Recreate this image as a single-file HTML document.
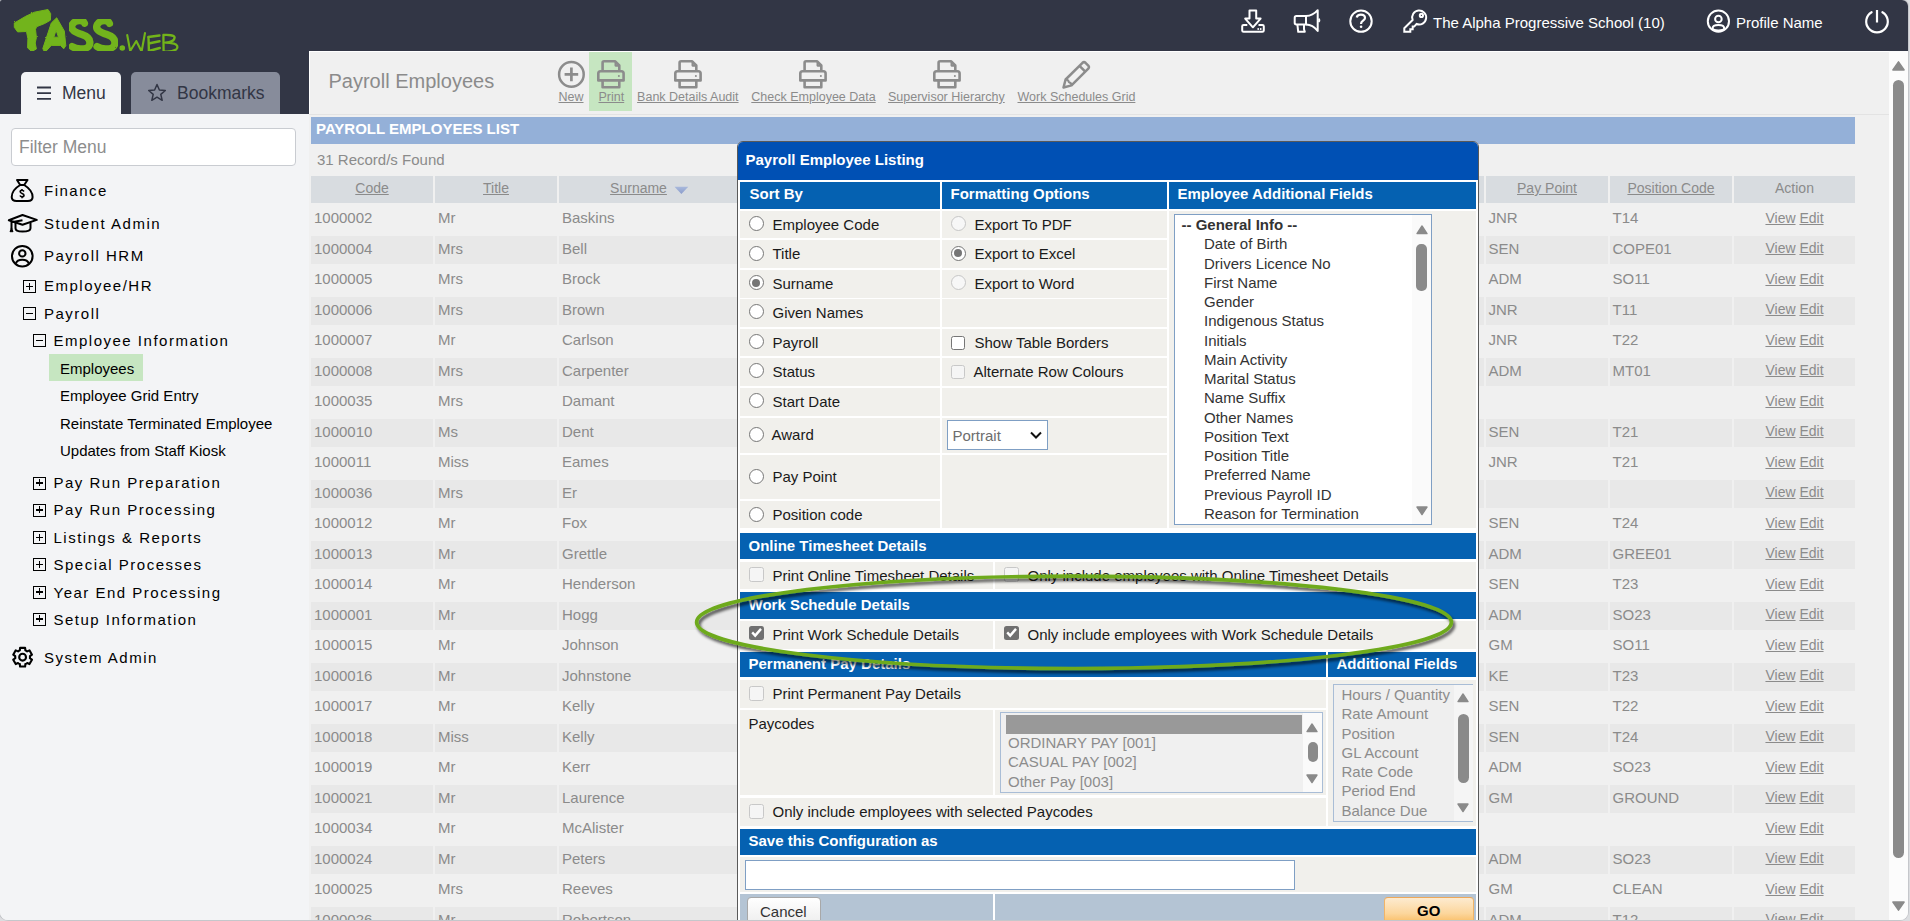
<!DOCTYPE html>
<html><head><meta charset="utf-8">
<style>
*{box-sizing:border-box;margin:0;padding:0}
html,body{width:1910px;height:921px;overflow:hidden;background:#dcdde0}
body{font-family:"Liberation Sans",sans-serif;position:relative}
.abs{position:absolute}
#frame{position:absolute;left:0;top:0;width:1908px;height:920px;overflow:hidden;border-radius:2px 6px 8px 8px;background:#f0f0f0}
#framebd{position:absolute;left:0;top:0;width:1908px;height:920px;border-radius:2px 6px 8px 8px;box-shadow:0 0 0 1px #c5c7cb}
#hdr{position:absolute;left:0;top:0;width:1908px;height:51px;background:#323645}
#side{position:absolute;left:0;top:51px;width:309px;height:870px;background:#f3f4f6}
#sidetop{position:absolute;left:0;top:0;width:309px;height:63px;background:#323645}
.tab{position:absolute;top:21px;height:42px;border-radius:5px 5px 0 0;font-size:17.5px;color:#323645;line-height:42px}
#content{position:absolute;left:309px;top:51px;width:1580px;height:870px;background:#f0f0f0}
#vscroll{position:absolute;left:1889px;top:51px;width:19px;height:869px;background:#fcfcfc}
.hdrtxt{position:absolute;top:14px;color:#fff;font-size:15px;line-height:17px;white-space:nowrap}
.mi{position:absolute;white-space:nowrap;font-size:15px;line-height:17px;color:#000;letter-spacing:0.1em;margin-top:-1px}
.si{position:absolute;white-space:nowrap;font-size:15px;line-height:17px;color:#000;margin-top:-1.3px;margin-left:-1px}
.box{position:absolute;width:13px;height:13px;border:1.15px solid #000}
.box:before{content:"";position:absolute;left:1.7px;top:4.9px;width:7px;height:1.3px;background:#000}
.box.plus:after{content:"";position:absolute;left:4.7px;top:1.9px;width:1.3px;height:7px;background:#000}
.th{position:absolute;background:#d8dce0;color:#8b8b8b;font-size:14px;line-height:25px;text-align:center;white-space:nowrap}
.rb{position:absolute;background:#e8e8e8}
.td{position:absolute;font-size:15px;line-height:17px;color:#8b8b8b;white-space:nowrap}
.act{font-size:14px;width:121px;text-align:center}
.tl{position:absolute;top:39.1px;font-size:12.5px;line-height:15px;color:#8b8b8b;text-decoration:underline;white-space:nowrap}
.mt{position:absolute;font-size:15px;line-height:17px;color:#1a1a1a;white-space:nowrap}
.mh{position:absolute;font-size:15px;line-height:17px;color:#fff;font-weight:bold;white-space:nowrap}
.rd{position:absolute;width:15px;height:15px;border-radius:50%;border:1px solid #767676;background:#fff}
.rd.on:after{content:"";position:absolute;left:2.5px;top:2.5px;width:8px;height:8px;border-radius:50%;background:#767676}
.rd.on{border-color:#767676}
.rd.dis{border-color:#c6c6c6;background:#f7f7f7}
.cb{position:absolute;width:14.5px;height:14.5px;border-radius:2.5px;border:1px solid #767676;background:#fff}
.cb.dis{border-color:#c8c8c8;background:#f5f5f5}
.cb.on{border:none;background:#707070}
</style></head><body>
<div id="framebd"></div>
<div id="frame">
  <div id="hdr">
    <svg class="abs" style="left:0;top:0" width="190" height="60" viewBox="0 0 190 60">
      <defs><filter id="rough" x="-5%" y="-5%" width="110%" height="110%"><feTurbulence type="fractalNoise" baseFrequency="0.9" numOctaves="2" seed="3"/><feDisplacementMap in="SourceGraphic" scale="1.6"/></filter></defs>
      <g fill="#72b41a" stroke="#72b41a" stroke-linejoin="round" filter="url(#rough)">
        <path d="M14.3 23 L25.7 16.3 L34.4 12.2 L48 9.5 L50.7 13.7 L50.4 20.2 L44.7 23.5 L36.6 26.7 L35.5 29.4 L36.4 37.6 L35.2 43 L36.4 49 L31.7 51.5 L27.6 47.9 L27.9 38.7 L26.5 31.5 L17.6 31.9 L14.3 27.3 Z" stroke-width="1"/>
        <path d="M42.8 48.6 L44.8 52.5 L48 49 L51.3 45.4 L60.5 45.4 L63.7 48.8 L65.8 45.7 L64.3 31 L56.7 17.8 L51.3 23 Z M53.8 37.2 L56.1 30.2 L58.5 37.2 Z" stroke-width="1" fill-rule="evenodd"/>
      </g>
      <g fill="none" stroke="#72b41a" stroke-linecap="round" stroke-linejoin="round" filter="url(#rough)">
        <path d="M84.5 23.3 C83 19.5,75 19.5,72.3 24.5 C69.5 30,76 32.5,82 34.5 C88 36.5,91 40,89.5 45 C87.5 50,77 50,72 46.5" stroke-width="7.2"/>
        <path d="M109.5 23.5 C108 19.5,100 19.5,97.3 24.5 C94.5 30,101 32.5,107 34.5 C113 36.5,116 40,114.5 45 C112.5 50,102 50,97 46.5" stroke-width="7.2"/>
      </g>
      <g fill="none" stroke="#72b41a" stroke-linecap="round" stroke-linejoin="round">
        <circle cx="122.3" cy="48" r="2.8" fill="#72b41a" stroke="none"/>
        <path d="M127.2 35 L130.2 51 L136.3 41 L141.6 51.5 L145 33" stroke-width="2.1"/>
        <path d="M148.2 37 L159.5 35.5 M148.5 37 L148.9 51 L159.8 48 M149.8 43.3 L159.5 41.3" stroke-width="2.4"/>
        <path d="M163.4 35 L163.6 51.3 C167 51.8,172 51.5,176.2 49.5 C178.5 47.5,177.5 44.5,174 43.6 C170.5 42.8,167.5 42.6,165.5 42.6 C170 42.2,174.5 40.5,174.6 37.6 C174.6 35.2,168 34.6,163.4 35" stroke-width="2.3"/>
      </g>
    </svg>
    <svg class="abs" style="left:1236px;top:5px" width="34" height="32" viewBox="0 0 34 32" fill="none" stroke="#fff" stroke-width="2" stroke-linejoin="round">
      <path d="M13.5 5.5 H20.2 V13.6 H24.6 L16.9 22.3 L9.2 13.6 H13.5 Z"/>
      <path d="M11.3 19.9 H7.6 Q6.2 19.9,6.2 21.3 V25.4 Q6.2 26.8,7.6 26.8 H26.4 Q27.8 26.8,27.8 25.4 V21.3 Q27.8 19.9,26.4 19.9 H22.5"/>
      <circle cx="22.2" cy="24" r="0.9" fill="#fff" stroke="none"/><circle cx="24.7" cy="24" r="0.9" fill="#fff" stroke="none"/>
    </svg>
    <svg class="abs" style="left:1288px;top:5px" width="36" height="32" viewBox="0 0 36 32" fill="none" stroke="#fff" stroke-width="2" stroke-linejoin="round">
      <path d="M18 11.1 H8.4 Q6.7 11.1,6.7 12.8 V17.8 Q6.7 19.5,8.4 19.5 H18 Z"/>
      <path d="M18 11.1 Q24.8 10.9,29.7 5.2 V25.9 Q24.8 19.7,18 19.5"/>
      <path d="M30.6 13.6 Q32.2 15.3,30.6 17" stroke-width="1.8"/>
      <path d="M9.4 19.5 L10.2 26.8 H16.8 L16 24.3 V19.5"/>
    </svg>
    <svg class="abs" style="left:1344px;top:5px" width="34" height="32" viewBox="0 0 34 32" fill="none" stroke="#fff" stroke-width="2">
      <circle cx="17" cy="16.15" r="10.7"/>
      <path d="M12.7 12.4 C13.1 10.6,14.8 9.6,16.9 9.6 C19.3 9.6,21 11,21 13 C21 15.6,17.1 15.9,17.1 18.6 V19" stroke-width="2.2"/>
      <circle cx="17.1" cy="21.7" r="1.3" fill="#fff" stroke="none"/>
    </svg>
    <svg class="abs" style="left:1398px;top:5px" width="34" height="32" viewBox="0 0 34 32" fill="none" stroke="#fff" stroke-width="2" stroke-linejoin="miter">
      <path d="M14.6 14.9 A7 7 0 1 1 18.6 19 L16.1 21.6 H14.7 V24.2 H12.3 V26.8 H6.3 V23.2 Z"/>
      <circle cx="23.4" cy="10.4" r="1.6"/>
    </svg>
    <div class="hdrtxt" style="left:1433px">The Alpha Progressive School (10)</div>
    <svg class="abs" style="left:1700px;top:5px" width="34" height="32" viewBox="0 0 34 32" fill="none" stroke="#fff" stroke-width="2">
      <circle cx="18.4" cy="16.15" r="10.6"/>
      <circle cx="18.4" cy="14" r="3.3"/>
      <path d="M12.6 23.3 C12.6 20.8,15.2 19.9,18.4 19.9 C21.6 19.9,24.2 20.8,24.2 23.3 C24.2 24.8,21.5 25.4,18.4 25.4 C15.3 25.4,12.6 24.8,12.6 23.3 Z"/>
    </svg>
    <div class="hdrtxt" style="left:1736px">Profile Name</div>
    <svg class="abs" style="left:1860px;top:5px" width="34" height="32" viewBox="0 0 34 32" fill="none" stroke="#fff" stroke-width="2.2" stroke-linecap="round">
      <path d="M11.6 7.2 A10.8 10.8 0 1 0 22.4 7.2"/>
      <path d="M17 5 V17.4" stroke-linecap="butt"/>
    </svg>
  </div>
  <div id="side">
    <div id="sidetop">
      <div class="tab" style="left:21px;width:100px;background:#f3f4f6">
        <svg class="abs" style="left:15px;top:13px" width="16" height="16" viewBox="0 0 16 16" stroke="#323645" stroke-width="1.8"><path d="M1 2.5H15M1 8.2H15M1 13.9H15"/></svg>
        <span class="abs" style="left:41px;top:0">Menu</span>
      </div>
      <div class="tab" style="left:131px;width:149px;background:#878c9b">
        <svg class="abs" style="left:16px;top:11px" width="20" height="20" viewBox="0 0 20 20" fill="none" stroke="#323645" stroke-width="1.5" stroke-linejoin="round"><path d="M10 1.5 L12.4 7 L18.3 7.5 L13.8 11.4 L15.2 17.3 L10 14.2 L4.8 17.3 L6.2 11.4 L1.7 7.5 L7.6 7 Z"/></svg>
        <span class="abs" style="left:46px;top:0">Bookmarks</span>
      </div>
    </div>
    <div class="abs" style="left:11px;top:77px;width:285px;height:38px;background:#fff;border:1px solid #c9ccd1;border-radius:4px"></div>
    <div class="abs" style="left:19px;top:86px;font-size:17.5px;line-height:20px;color:#8d8d8d">Filter Menu</div>
    <svg class="abs" style="left:9px;top:127px" width="28" height="26" viewBox="0 0 28 26" fill="none" stroke="#000" stroke-width="2" stroke-linejoin="round">
      <path d="M8 2 H18.5 L15.2 7 C19.2 9.5,23.6 14,23.6 19 C23.6 21.8,21.8 23,18.8 23 H7.6 C4.6 23,2.7 21.8,2.7 19 C2.7 14,7 9.5,11.2 7 Z"/>
      <path d="M11 7 H15"/>
      <path d="M15 13.5 C14.5 12.6,13.8 12.3,13 12.3 C12 12.3,11.2 12.9,11.2 13.8 C11.2 15.8,15 15,15 17.2 C15 18.2,14.1 18.8,13 18.8 C12 18.8,11.3 18.3,11 17.5 M13 11 V12.3 M13 18.8 V20.2" stroke-width="1.6"/>
    </svg>
    <svg class="abs" style="left:7px;top:161px" width="32" height="22" viewBox="0 0 32 22" fill="none" stroke="#000" stroke-width="2" stroke-linejoin="round">
      <path d="M1.8 8.2 L15.5 3 L29.8 7.9 L15.5 12.8 Z"/>
      <path d="M8.5 10.6 V16.3 C8.5 18.8,12 19.6,15.5 19.6 C19 19.6,23.5 18.8,23.5 16.3 V10.6"/>
      <path d="M15.5 8.2 L4.5 10.2 V17"/>
      <path d="M4.5 15.8 L3 19.7 H6 Z" fill="#000" stroke-width="1"/>
    </svg>
    <svg class="abs" style="left:9px;top:191px" width="28" height="28" viewBox="0 0 28 28" fill="none" stroke="#000" stroke-width="2">
      <circle cx="13.3" cy="14.2" r="10.3"/>
      <circle cx="13.3" cy="11.4" r="3.2"/>
      <path d="M6.8 21.5 C7.7 18.8,10 17.8,13.3 17.8 C16.6 17.8,18.9 18.8,19.8 21.5"/>
    </svg>
    <div class="mi" style="left:44px;top:132px">Finance</div>
    <div class="mi" style="left:44px;top:165px">Student Admin</div>
    <div class="mi" style="left:44px;top:197px">Payroll HRM</div>
    <div class="box plus" style="left:23px;top:229px"></div>
    <div class="mi" style="left:44px;top:227px">Employee/HR</div>
    <div class="box" style="left:23px;top:256px"></div>
    <div class="mi" style="left:44px;top:255px">Payroll</div>
    <div class="box" style="left:33px;top:283px"></div>
    <div class="mi" style="left:53.5px;top:282px">Employee Information</div>
    <div class="abs" style="left:49px;top:303px;width:94px;height:26.5px;background:#c6e6c1"></div>
    <div class="si" style="left:61px;top:310px">Employees</div>
    <div class="si" style="left:61px;top:337px">Employee Grid Entry</div>
    <div class="si" style="left:61px;top:365px">Reinstate Terminated Employee</div>
    <div class="si" style="left:61px;top:392px">Updates from Staff Kiosk</div>
    <div class="box plus" style="left:33px;top:425.5px"></div>
    <div class="mi" style="left:53.5px;top:424px">Pay Run Preparation</div>
    <div class="box plus" style="left:33px;top:452.5px"></div>
    <div class="mi" style="left:53.5px;top:451px">Pay Run Processing</div>
    <div class="box plus" style="left:33px;top:480px"></div>
    <div class="mi" style="left:53.5px;top:479px">Listings &amp; Reports</div>
    <div class="box plus" style="left:33px;top:507px"></div>
    <div class="mi" style="left:53.5px;top:506px">Special Processes</div>
    <div class="box plus" style="left:33px;top:534.5px"></div>
    <div class="mi" style="left:53.5px;top:534px">Year End Processing</div>
    <div class="box plus" style="left:33px;top:561.5px"></div>
    <div class="mi" style="left:53.5px;top:561px">Setup Information</div>
    <svg class="abs" style="left:9px;top:593px" width="27" height="27" viewBox="0 0 27 27" fill="none" stroke="#000" stroke-width="2.1" stroke-linejoin="round">
      <path d="M10.83 6.34 L11.09 3.83 L16.11 3.83 L16.37 6.34 L16.84 6.55 L17.30 6.79 L17.74 7.07 L18.16 7.37 L20.46 6.34 L22.97 10.69 L20.93 12.17 L20.98 12.68 L21.00 13.20 L20.98 13.72 L20.93 14.23 L22.97 15.71 L20.46 20.06 L18.16 19.03 L17.74 19.33 L17.30 19.61 L16.84 19.85 L16.37 20.06 L16.11 22.57 L11.09 22.57 L10.83 20.06 L10.36 19.85 L9.90 19.61 L9.46 19.33 L9.04 19.03 L6.74 20.06 L4.23 15.71 L6.27 14.23 L6.22 13.72 L6.20 13.20 L6.22 12.68 L6.27 12.17 L4.23 10.69 L6.74 6.34 L9.04 7.37 L9.46 7.07 L9.90 6.79 L10.36 6.55 Z"/>
      <circle cx="13.6" cy="13.2" r="3.4"/>
    </svg>
    <div class="mi" style="left:44px;top:598.6px">System Admin</div>
    </div>
  <div id="content">
    <div class="abs" style="left:0;top:0;width:1px;height:63px;background:#fff"></div><div class="abs" style="left:0;top:0;width:1580px;height:1px;background:#fff"></div>
    <div class="abs" style="left:19.5px;top:19px;font-size:20px;line-height:23px;color:#8b8b8b;white-space:nowrap">Payroll Employees</div>
    <div class="abs" style="left:280px;top:1px;width:43px;height:59px;background:#c6e6c1"></div>
    <svg class="abs" style="left:248px;top:9px" width="29" height="29" viewBox="0 0 29 29" fill="none" stroke="#8c8c8c" stroke-width="2.5">
      <circle cx="14.4" cy="14.4" r="12.3"/><path d="M14.4 7.6 V21.2 M7.6 14.4 H21.2" stroke-width="2.7"/></svg>
    <svg class="abs" style="left:288px;top:9px" width="28" height="29" viewBox="0 0 28 29" fill="none" stroke="#8c8c8c" stroke-width="2.6" stroke-linejoin="round">
      <path d="M5.6 11 V2.8 Q5.6 1.3,7.1 1.3 H18.2 L22.3 5.4 V11"/><path d="M18.6 1.8 V5.6 H22" stroke-width="2.2"/>
      <path d="M1.3 20.4 V13.6 Q1.3 11.3,3.6 11.3 H24.3 Q26.6 11.3,26.6 13.6 V20.4 Z"/>
      <path d="M5.6 20.4 V27.2 H22.3 V20.4"/>
      <circle cx="21.9" cy="16.1" r="1" fill="#8c8c8c" stroke="none"/></svg><svg class="abs" style="left:365px;top:9px" width="28" height="29" viewBox="0 0 28 29" fill="none" stroke="#8c8c8c" stroke-width="2.6" stroke-linejoin="round">
      <path d="M5.6 11 V2.8 Q5.6 1.3,7.1 1.3 H18.2 L22.3 5.4 V11"/><path d="M18.6 1.8 V5.6 H22" stroke-width="2.2"/>
      <path d="M1.3 20.4 V13.6 Q1.3 11.3,3.6 11.3 H24.3 Q26.6 11.3,26.6 13.6 V20.4 Z"/>
      <path d="M5.6 20.4 V27.2 H22.3 V20.4"/>
      <circle cx="21.9" cy="16.1" r="1" fill="#8c8c8c" stroke="none"/></svg><svg class="abs" style="left:490px;top:9px" width="28" height="29" viewBox="0 0 28 29" fill="none" stroke="#8c8c8c" stroke-width="2.6" stroke-linejoin="round">
      <path d="M5.6 11 V2.8 Q5.6 1.3,7.1 1.3 H18.2 L22.3 5.4 V11"/><path d="M18.6 1.8 V5.6 H22" stroke-width="2.2"/>
      <path d="M1.3 20.4 V13.6 Q1.3 11.3,3.6 11.3 H24.3 Q26.6 11.3,26.6 13.6 V20.4 Z"/>
      <path d="M5.6 20.4 V27.2 H22.3 V20.4"/>
      <circle cx="21.9" cy="16.1" r="1" fill="#8c8c8c" stroke="none"/></svg><svg class="abs" style="left:623.5px;top:9px" width="28" height="29" viewBox="0 0 28 29" fill="none" stroke="#8c8c8c" stroke-width="2.6" stroke-linejoin="round">
      <path d="M5.6 11 V2.8 Q5.6 1.3,7.1 1.3 H18.2 L22.3 5.4 V11"/><path d="M18.6 1.8 V5.6 H22" stroke-width="2.2"/>
      <path d="M1.3 20.4 V13.6 Q1.3 11.3,3.6 11.3 H24.3 Q26.6 11.3,26.6 13.6 V20.4 Z"/>
      <path d="M5.6 20.4 V27.2 H22.3 V20.4"/>
      <circle cx="21.9" cy="16.1" r="1" fill="#8c8c8c" stroke="none"/></svg>
    <svg class="abs" style="left:753px;top:9px" width="29" height="29" viewBox="0 0 29 29" fill="none" stroke="#8c8c8c" stroke-width="2.5" stroke-linejoin="round">
      <path d="M20.5 2.8 Q22 1.5,23.5 2.8 L26.3 5.6 Q27.6 7.1,26.3 8.6 L9.5 25.4 L1.5 27.5 L3.6 19.5 Z"/><path d="M17.5 5.8 L23.3 11.6"/><path d="M3.6 19.5 Q6.5 19.5,6.8 22.2 Q9.5 22.5,9.5 25.4" stroke-width="2"/></svg>
    <div class="tl" style="left:249.5px">New</div><div class="tl" style="left:289.5px">Print</div><div class="tl" style="left:328.1px">Bank Details Audit</div><div class="tl" style="left:442.3px">Check Employee Data</div><div class="tl" style="left:579.0px">Supervisor Hierarchy</div><div class="tl" style="left:708.5px">Work Schedules Grid</div>
    <div class="abs" style="left:0;top:63px;width:1580px;height:1px;background:#e3e3e3"></div>
    <div class="abs" style="left:2px;top:66px;width:1544px;height:27px;background:#94b0d8;color:#fff;font-weight:bold;font-size:15px;line-height:24px;padding-left:5px;white-space:nowrap">PAYROLL EMPLOYEES LIST</div>
    <div class="abs" style="left:8px;top:100px;font-size:15px;line-height:17px;color:#8b8b8b;white-space:nowrap">31 Record/s Found</div>
    <div id="tbl">
<div class="th" style="left:2px;top:125px;width:122px;height:27.4px"><u>Code</u></div>
<div class="th" style="left:126px;top:125px;width:122px;height:27.4px"><u>Title</u></div>
<div class="th" style="left:250px;top:125px;width:181px;height:27.4px;padding-right:22px"><u>Surname</u><svg style="position:absolute;left:115px;top:10px" width="15" height="9" viewBox="0 0 15 9"><defs><linearGradient id="ag" x1="0" y1="0" x2="0" y2="1"><stop offset="0" stop-color="#a9b9dc"/><stop offset="1" stop-color="#8a9ccb"/></linearGradient></defs><path d="M0.5 0.8 H14.3 L7.4 8 Z" fill="url(#ag)"/></svg></div>
<div class="th" style="left:1177px;top:125px;width:122px;height:27.4px"><u>Pay Point</u></div>
<div class="th" style="left:1301px;top:125px;width:122px;height:27.4px"><u>Position Code</u></div>
<div class="th" style="left:1425px;top:125px;width:121px;height:27.4px">Action</div>
<div class="th" style="left:433px;top:125px;width:742px;height:27.4px"></div>
<div class="td" style="left:5px;top:158.4px">1000002</div>
<div class="td" style="left:129px;top:158.4px">Mr</div>
<div class="td" style="left:253px;top:158.4px">Baskins</div>
<div class="td" style="left:1179.5px;top:158.4px">JNR</div>
<div class="td" style="left:1303.5px;top:158.4px">T14</div>
<div class="td act" style="left:1425px;top:158.9px"><u>View</u> <u>Edit</u></div>
<div class="rb" style="left:2px;top:184.9px;width:122px;height:28.5px"></div>
<div class="rb" style="left:126px;top:184.9px;width:122px;height:28.5px"></div>
<div class="rb" style="left:250px;top:184.9px;width:925px;height:28.5px"></div>
<div class="rb" style="left:1177px;top:184.9px;width:122px;height:28.5px"></div>
<div class="rb" style="left:1301px;top:184.9px;width:122px;height:28.5px"></div>
<div class="rb" style="left:1425px;top:184.9px;width:121px;height:28.5px"></div>
<div class="td" style="left:5px;top:188.9px">1000004</div>
<div class="td" style="left:129px;top:188.9px">Mrs</div>
<div class="td" style="left:253px;top:188.9px">Bell</div>
<div class="td" style="left:1179.5px;top:188.9px">SEN</div>
<div class="td" style="left:1303.5px;top:188.9px">COPE01</div>
<div class="td act" style="left:1425px;top:189.4px"><u>View</u> <u>Edit</u></div>
<div class="td" style="left:5px;top:219.4px">1000005</div>
<div class="td" style="left:129px;top:219.4px">Mrs</div>
<div class="td" style="left:253px;top:219.4px">Brock</div>
<div class="td" style="left:1179.5px;top:219.4px">ADM</div>
<div class="td" style="left:1303.5px;top:219.4px">SO11</div>
<div class="td act" style="left:1425px;top:219.9px"><u>View</u> <u>Edit</u></div>
<div class="rb" style="left:2px;top:245.9px;width:122px;height:28.5px"></div>
<div class="rb" style="left:126px;top:245.9px;width:122px;height:28.5px"></div>
<div class="rb" style="left:250px;top:245.9px;width:925px;height:28.5px"></div>
<div class="rb" style="left:1177px;top:245.9px;width:122px;height:28.5px"></div>
<div class="rb" style="left:1301px;top:245.9px;width:122px;height:28.5px"></div>
<div class="rb" style="left:1425px;top:245.9px;width:121px;height:28.5px"></div>
<div class="td" style="left:5px;top:249.9px">1000006</div>
<div class="td" style="left:129px;top:249.9px">Mrs</div>
<div class="td" style="left:253px;top:249.9px">Brown</div>
<div class="td" style="left:1179.5px;top:249.9px">JNR</div>
<div class="td" style="left:1303.5px;top:249.9px">T11</div>
<div class="td act" style="left:1425px;top:250.4px"><u>View</u> <u>Edit</u></div>
<div class="td" style="left:5px;top:280.4px">1000007</div>
<div class="td" style="left:129px;top:280.4px">Mr</div>
<div class="td" style="left:253px;top:280.4px">Carlson</div>
<div class="td" style="left:1179.5px;top:280.4px">JNR</div>
<div class="td" style="left:1303.5px;top:280.4px">T22</div>
<div class="td act" style="left:1425px;top:280.9px"><u>View</u> <u>Edit</u></div>
<div class="rb" style="left:2px;top:306.9px;width:122px;height:28.5px"></div>
<div class="rb" style="left:126px;top:306.9px;width:122px;height:28.5px"></div>
<div class="rb" style="left:250px;top:306.9px;width:925px;height:28.5px"></div>
<div class="rb" style="left:1177px;top:306.9px;width:122px;height:28.5px"></div>
<div class="rb" style="left:1301px;top:306.9px;width:122px;height:28.5px"></div>
<div class="rb" style="left:1425px;top:306.9px;width:121px;height:28.5px"></div>
<div class="td" style="left:5px;top:310.9px">1000008</div>
<div class="td" style="left:129px;top:310.9px">Mrs</div>
<div class="td" style="left:253px;top:310.9px">Carpenter</div>
<div class="td" style="left:1179.5px;top:310.9px">ADM</div>
<div class="td" style="left:1303.5px;top:310.9px">MT01</div>
<div class="td act" style="left:1425px;top:311.4px"><u>View</u> <u>Edit</u></div>
<div class="td" style="left:5px;top:341.4px">1000035</div>
<div class="td" style="left:129px;top:341.4px">Mrs</div>
<div class="td" style="left:253px;top:341.4px">Damant</div>
<div class="td act" style="left:1425px;top:341.9px"><u>View</u> <u>Edit</u></div>
<div class="rb" style="left:2px;top:367.9px;width:122px;height:28.5px"></div>
<div class="rb" style="left:126px;top:367.9px;width:122px;height:28.5px"></div>
<div class="rb" style="left:250px;top:367.9px;width:925px;height:28.5px"></div>
<div class="rb" style="left:1177px;top:367.9px;width:122px;height:28.5px"></div>
<div class="rb" style="left:1301px;top:367.9px;width:122px;height:28.5px"></div>
<div class="rb" style="left:1425px;top:367.9px;width:121px;height:28.5px"></div>
<div class="td" style="left:5px;top:371.9px">1000010</div>
<div class="td" style="left:129px;top:371.9px">Ms</div>
<div class="td" style="left:253px;top:371.9px">Dent</div>
<div class="td" style="left:1179.5px;top:371.9px">SEN</div>
<div class="td" style="left:1303.5px;top:371.9px">T21</div>
<div class="td act" style="left:1425px;top:372.4px"><u>View</u> <u>Edit</u></div>
<div class="td" style="left:5px;top:402.4px">1000011</div>
<div class="td" style="left:129px;top:402.4px">Miss</div>
<div class="td" style="left:253px;top:402.4px">Eames</div>
<div class="td" style="left:1179.5px;top:402.4px">JNR</div>
<div class="td" style="left:1303.5px;top:402.4px">T21</div>
<div class="td act" style="left:1425px;top:402.9px"><u>View</u> <u>Edit</u></div>
<div class="rb" style="left:2px;top:428.9px;width:122px;height:28.5px"></div>
<div class="rb" style="left:126px;top:428.9px;width:122px;height:28.5px"></div>
<div class="rb" style="left:250px;top:428.9px;width:925px;height:28.5px"></div>
<div class="rb" style="left:1177px;top:428.9px;width:122px;height:28.5px"></div>
<div class="rb" style="left:1301px;top:428.9px;width:122px;height:28.5px"></div>
<div class="rb" style="left:1425px;top:428.9px;width:121px;height:28.5px"></div>
<div class="td" style="left:5px;top:432.9px">1000036</div>
<div class="td" style="left:129px;top:432.9px">Mrs</div>
<div class="td" style="left:253px;top:432.9px">Er</div>
<div class="td act" style="left:1425px;top:433.4px"><u>View</u> <u>Edit</u></div>
<div class="td" style="left:5px;top:463.4px">1000012</div>
<div class="td" style="left:129px;top:463.4px">Mr</div>
<div class="td" style="left:253px;top:463.4px">Fox</div>
<div class="td" style="left:1179.5px;top:463.4px">SEN</div>
<div class="td" style="left:1303.5px;top:463.4px">T24</div>
<div class="td act" style="left:1425px;top:463.9px"><u>View</u> <u>Edit</u></div>
<div class="rb" style="left:2px;top:489.9px;width:122px;height:28.5px"></div>
<div class="rb" style="left:126px;top:489.9px;width:122px;height:28.5px"></div>
<div class="rb" style="left:250px;top:489.9px;width:925px;height:28.5px"></div>
<div class="rb" style="left:1177px;top:489.9px;width:122px;height:28.5px"></div>
<div class="rb" style="left:1301px;top:489.9px;width:122px;height:28.5px"></div>
<div class="rb" style="left:1425px;top:489.9px;width:121px;height:28.5px"></div>
<div class="td" style="left:5px;top:493.9px">1000013</div>
<div class="td" style="left:129px;top:493.9px">Mr</div>
<div class="td" style="left:253px;top:493.9px">Grettle</div>
<div class="td" style="left:1179.5px;top:493.9px">ADM</div>
<div class="td" style="left:1303.5px;top:493.9px">GREE01</div>
<div class="td act" style="left:1425px;top:494.4px"><u>View</u> <u>Edit</u></div>
<div class="td" style="left:5px;top:524.4px">1000014</div>
<div class="td" style="left:129px;top:524.4px">Mr</div>
<div class="td" style="left:253px;top:524.4px">Henderson</div>
<div class="td" style="left:1179.5px;top:524.4px">SEN</div>
<div class="td" style="left:1303.5px;top:524.4px">T23</div>
<div class="td act" style="left:1425px;top:524.9px"><u>View</u> <u>Edit</u></div>
<div class="rb" style="left:2px;top:550.9px;width:122px;height:28.5px"></div>
<div class="rb" style="left:126px;top:550.9px;width:122px;height:28.5px"></div>
<div class="rb" style="left:250px;top:550.9px;width:925px;height:28.5px"></div>
<div class="rb" style="left:1177px;top:550.9px;width:122px;height:28.5px"></div>
<div class="rb" style="left:1301px;top:550.9px;width:122px;height:28.5px"></div>
<div class="rb" style="left:1425px;top:550.9px;width:121px;height:28.5px"></div>
<div class="td" style="left:5px;top:554.9px">1000001</div>
<div class="td" style="left:129px;top:554.9px">Mr</div>
<div class="td" style="left:253px;top:554.9px">Hogg</div>
<div class="td" style="left:1179.5px;top:554.9px">ADM</div>
<div class="td" style="left:1303.5px;top:554.9px">SO23</div>
<div class="td act" style="left:1425px;top:555.4px"><u>View</u> <u>Edit</u></div>
<div class="td" style="left:5px;top:585.4px">1000015</div>
<div class="td" style="left:129px;top:585.4px">Mr</div>
<div class="td" style="left:253px;top:585.4px">Johnson</div>
<div class="td" style="left:1179.5px;top:585.4px">GM</div>
<div class="td" style="left:1303.5px;top:585.4px">SO11</div>
<div class="td act" style="left:1425px;top:585.9px"><u>View</u> <u>Edit</u></div>
<div class="rb" style="left:2px;top:611.9px;width:122px;height:28.5px"></div>
<div class="rb" style="left:126px;top:611.9px;width:122px;height:28.5px"></div>
<div class="rb" style="left:250px;top:611.9px;width:925px;height:28.5px"></div>
<div class="rb" style="left:1177px;top:611.9px;width:122px;height:28.5px"></div>
<div class="rb" style="left:1301px;top:611.9px;width:122px;height:28.5px"></div>
<div class="rb" style="left:1425px;top:611.9px;width:121px;height:28.5px"></div>
<div class="td" style="left:5px;top:615.9px">1000016</div>
<div class="td" style="left:129px;top:615.9px">Mr</div>
<div class="td" style="left:253px;top:615.9px">Johnstone</div>
<div class="td" style="left:1179.5px;top:615.9px">KE</div>
<div class="td" style="left:1303.5px;top:615.9px">T23</div>
<div class="td act" style="left:1425px;top:616.4px"><u>View</u> <u>Edit</u></div>
<div class="td" style="left:5px;top:646.4px">1000017</div>
<div class="td" style="left:129px;top:646.4px">Mr</div>
<div class="td" style="left:253px;top:646.4px">Kelly</div>
<div class="td" style="left:1179.5px;top:646.4px">SEN</div>
<div class="td" style="left:1303.5px;top:646.4px">T22</div>
<div class="td act" style="left:1425px;top:646.9px"><u>View</u> <u>Edit</u></div>
<div class="rb" style="left:2px;top:672.9px;width:122px;height:28.5px"></div>
<div class="rb" style="left:126px;top:672.9px;width:122px;height:28.5px"></div>
<div class="rb" style="left:250px;top:672.9px;width:925px;height:28.5px"></div>
<div class="rb" style="left:1177px;top:672.9px;width:122px;height:28.5px"></div>
<div class="rb" style="left:1301px;top:672.9px;width:122px;height:28.5px"></div>
<div class="rb" style="left:1425px;top:672.9px;width:121px;height:28.5px"></div>
<div class="td" style="left:5px;top:676.9px">1000018</div>
<div class="td" style="left:129px;top:676.9px">Miss</div>
<div class="td" style="left:253px;top:676.9px">Kelly</div>
<div class="td" style="left:1179.5px;top:676.9px">SEN</div>
<div class="td" style="left:1303.5px;top:676.9px">T24</div>
<div class="td act" style="left:1425px;top:677.4px"><u>View</u> <u>Edit</u></div>
<div class="td" style="left:5px;top:707.4px">1000019</div>
<div class="td" style="left:129px;top:707.4px">Mr</div>
<div class="td" style="left:253px;top:707.4px">Kerr</div>
<div class="td" style="left:1179.5px;top:707.4px">ADM</div>
<div class="td" style="left:1303.5px;top:707.4px">SO23</div>
<div class="td act" style="left:1425px;top:707.9px"><u>View</u> <u>Edit</u></div>
<div class="rb" style="left:2px;top:733.9px;width:122px;height:28.5px"></div>
<div class="rb" style="left:126px;top:733.9px;width:122px;height:28.5px"></div>
<div class="rb" style="left:250px;top:733.9px;width:925px;height:28.5px"></div>
<div class="rb" style="left:1177px;top:733.9px;width:122px;height:28.5px"></div>
<div class="rb" style="left:1301px;top:733.9px;width:122px;height:28.5px"></div>
<div class="rb" style="left:1425px;top:733.9px;width:121px;height:28.5px"></div>
<div class="td" style="left:5px;top:737.9px">1000021</div>
<div class="td" style="left:129px;top:737.9px">Mr</div>
<div class="td" style="left:253px;top:737.9px">Laurence</div>
<div class="td" style="left:1179.5px;top:737.9px">GM</div>
<div class="td" style="left:1303.5px;top:737.9px">GROUND</div>
<div class="td act" style="left:1425px;top:738.4px"><u>View</u> <u>Edit</u></div>
<div class="td" style="left:5px;top:768.4px">1000034</div>
<div class="td" style="left:129px;top:768.4px">Mr</div>
<div class="td" style="left:253px;top:768.4px">McAlister</div>
<div class="td act" style="left:1425px;top:768.9px"><u>View</u> <u>Edit</u></div>
<div class="rb" style="left:2px;top:794.9px;width:122px;height:28.5px"></div>
<div class="rb" style="left:126px;top:794.9px;width:122px;height:28.5px"></div>
<div class="rb" style="left:250px;top:794.9px;width:925px;height:28.5px"></div>
<div class="rb" style="left:1177px;top:794.9px;width:122px;height:28.5px"></div>
<div class="rb" style="left:1301px;top:794.9px;width:122px;height:28.5px"></div>
<div class="rb" style="left:1425px;top:794.9px;width:121px;height:28.5px"></div>
<div class="td" style="left:5px;top:798.9px">1000024</div>
<div class="td" style="left:129px;top:798.9px">Mr</div>
<div class="td" style="left:253px;top:798.9px">Peters</div>
<div class="td" style="left:1179.5px;top:798.9px">ADM</div>
<div class="td" style="left:1303.5px;top:798.9px">SO23</div>
<div class="td act" style="left:1425px;top:799.4px"><u>View</u> <u>Edit</u></div>
<div class="td" style="left:5px;top:829.4px">1000025</div>
<div class="td" style="left:129px;top:829.4px">Mrs</div>
<div class="td" style="left:253px;top:829.4px">Reeves</div>
<div class="td" style="left:1179.5px;top:829.4px">GM</div>
<div class="td" style="left:1303.5px;top:829.4px">CLEAN</div>
<div class="td act" style="left:1425px;top:829.9px"><u>View</u> <u>Edit</u></div>
<div class="rb" style="left:2px;top:855.9px;width:122px;height:28.5px"></div>
<div class="rb" style="left:126px;top:855.9px;width:122px;height:28.5px"></div>
<div class="rb" style="left:250px;top:855.9px;width:925px;height:28.5px"></div>
<div class="rb" style="left:1177px;top:855.9px;width:122px;height:28.5px"></div>
<div class="rb" style="left:1301px;top:855.9px;width:122px;height:28.5px"></div>
<div class="rb" style="left:1425px;top:855.9px;width:121px;height:28.5px"></div>
<div class="td" style="left:5px;top:859.9px">1000026</div>
<div class="td" style="left:129px;top:859.9px">Mr</div>
<div class="td" style="left:253px;top:859.9px">Robertson</div>
<div class="td" style="left:1179.5px;top:859.9px">ADM</div>
<div class="td" style="left:1303.5px;top:859.9px">T12</div>
<div class="td act" style="left:1425px;top:860.4px"><u>View</u> <u>Edit</u></div>
</div>
  </div>
  <div id="modal"><!--MODAL--><div class="abs" style="left:737px;top:141px;width:742px;height:790px;background:#fff;border:1px solid #595959;border-radius:6px 6px 0 0;overflow:hidden"><div class="abs" style="left:0;top:0;width:740px;height:37.6px;background:#0050b4"></div></div>
<div class="mh" style="left:745.50px;top:151.30px;">Payroll Employee Listing</div>
<div class="abs" style="left:740.00px;top:182.00px;width:200.00px;height:26.70px;background:#0561b1;"></div>
<div class="mh" style="left:749.50px;top:185.20px;">Sort By</div>
<div class="abs" style="left:942.00px;top:182.00px;width:225.00px;height:26.70px;background:#0561b1;"></div>
<div class="mh" style="left:950.50px;top:185.20px;">Formatting Options</div>
<div class="abs" style="left:1169.00px;top:182.00px;width:307.00px;height:26.70px;background:#0561b1;"></div>
<div class="mh" style="left:1177.50px;top:185.20px;">Employee Additional Fields</div>
<div class="abs" style="left:740.00px;top:210.60px;width:200.00px;height:27.90px;background:#f1f0ec;"></div>
<div class="rd" style="left:748.50px;top:216.40px"></div>
<div class="mt" style="left:772.50px;top:215.80px;">Employee Code</div>
<div class="abs" style="left:740.00px;top:240.10px;width:200.00px;height:27.90px;background:#f1f0ec;"></div>
<div class="rd" style="left:748.50px;top:245.90px"></div>
<div class="mt" style="left:772.50px;top:245.30px;">Title</div>
<div class="abs" style="left:740.00px;top:269.60px;width:200.00px;height:28.40px;background:#f1f0ec;"></div>
<div class="rd on" style="left:748.50px;top:275.20px"></div>
<div class="mt" style="left:772.50px;top:274.60px;">Surname</div>
<div class="abs" style="left:740.00px;top:299.10px;width:200.00px;height:27.90px;background:#f1f0ec;"></div>
<div class="rd" style="left:748.50px;top:304.40px"></div>
<div class="mt" style="left:772.50px;top:303.80px;">Given Names</div>
<div class="abs" style="left:740.00px;top:328.60px;width:200.00px;height:27.90px;background:#f1f0ec;"></div>
<div class="rd" style="left:748.50px;top:334.20px"></div>
<div class="mt" style="left:772.50px;top:333.60px;">Payroll</div>
<div class="abs" style="left:740.00px;top:358.10px;width:200.00px;height:27.50px;background:#f1f0ec;"></div>
<div class="rd" style="left:748.50px;top:363.30px"></div>
<div class="mt" style="left:772.50px;top:362.70px;">Status</div>
<div class="abs" style="left:740.00px;top:387.60px;width:200.00px;height:28.10px;background:#f1f0ec;"></div>
<div class="rd" style="left:748.50px;top:393.20px"></div>
<div class="mt" style="left:772.50px;top:392.60px;">Start Date</div>
<div class="abs" style="left:740.00px;top:417.60px;width:200.00px;height:35.30px;background:#f1f0ec;"></div>
<div class="rd" style="left:748.50px;top:426.50px"></div>
<div class="mt" style="left:771.50px;top:425.90px;">Award</div>
<div class="abs" style="left:740.00px;top:455.00px;width:200.00px;height:44.00px;background:#f1f0ec;"></div>
<div class="rd" style="left:748.50px;top:468.60px"></div>
<div class="mt" style="left:772.50px;top:468.00px;">Pay Point</div>
<div class="abs" style="left:740.00px;top:501.00px;width:200.00px;height:27.40px;background:#f1f0ec;"></div>
<div class="rd" style="left:748.50px;top:506.60px"></div>
<div class="mt" style="left:772.50px;top:506.00px;">Position code</div>
<div class="abs" style="left:942.00px;top:210.60px;width:225.00px;height:27.90px;background:#f1f0ec;"></div>
<div class="abs" style="left:942.00px;top:240.10px;width:225.00px;height:27.90px;background:#f1f0ec;"></div>
<div class="abs" style="left:942.00px;top:269.60px;width:225.00px;height:28.40px;background:#f1f0ec;"></div>
<div class="abs" style="left:942.00px;top:299.10px;width:225.00px;height:27.90px;background:#f1f0ec;"></div>
<div class="abs" style="left:942.00px;top:328.60px;width:225.00px;height:27.90px;background:#f1f0ec;"></div>
<div class="abs" style="left:942.00px;top:358.10px;width:225.00px;height:27.50px;background:#f1f0ec;"></div>
<div class="abs" style="left:942.00px;top:387.60px;width:225.00px;height:28.10px;background:#f1f0ec;"></div>
<div class="abs" style="left:942.00px;top:417.60px;width:225.00px;height:35.30px;background:#f1f0ec;"></div>
<div class="abs" style="left:942.00px;top:455.00px;width:225.00px;height:73.40px;background:#f1f0ec;"></div>
<div class="rd dis" style="left:950.50px;top:216.40px"></div>
<div class="mt" style="left:974.50px;top:215.80px;">Export To PDF</div>
<div class="rd on" style="left:950.50px;top:245.90px"></div>
<div class="mt" style="left:974.50px;top:245.30px;">Export to Excel</div>
<div class="rd dis" style="left:950.50px;top:275.20px"></div>
<div class="mt" style="left:974.50px;top:274.60px;">Export to Word</div>
<div class="cb " style="left:950.50px;top:335.50px"></div>
<div class="mt" style="left:974.50px;top:333.60px;">Show Table Borders</div>
<div class="cb dis" style="left:950.50px;top:364.60px"></div>
<div class="mt" style="left:973.50px;top:362.70px;">Alternate Row Colours</div>
<div class="abs" style="left:947.4px;top:420.4px;width:100.2px;height:29.8px;background:#fff;border:1px solid #7f9fc4"></div>
<div class="mt" style="left:952.50px;top:427.20px;color:#6d6d6d">Portrait</div>
<svg class="abs" style="left:1028.5px;top:430px" width="14" height="10" viewBox="0 0 14 10"><path d="M2 2.5 L7 7.5 L12 2.5" fill="none" stroke="#111" stroke-width="2"/></svg>
<div class="abs" style="left:1169.00px;top:210.60px;width:307.00px;height:317.80px;background:#f1f0ec;"></div>
<div class="abs" style="left:1174.3px;top:213.8px;width:257.7px;height:311.6px;background:#fff;border:1px solid #7f9fc4"></div>
<div class="abs" style="left:1412.00px;top:214.80px;width:19.00px;height:309.60px;background:#fafafa;"></div>
<svg class="abs" style="left:1412.5px;top:221.5px" width="18" height="14" viewBox="0 0 18 14"><path d="M4 11.6 L9 4 L14 11.6 Z" fill="#8a8a8a" stroke="#8a8a8a" stroke-width="1.4" stroke-linejoin="round"/></svg>
<svg class="abs" style="left:1412.5px;top:504px" width="18" height="14" viewBox="0 0 18 14"><path d="M4 3 L9 10.6 L14 3 Z" fill="#8a8a8a" stroke="#8a8a8a" stroke-width="1.4" stroke-linejoin="round"/></svg>
<div class="abs" style="left:1416.4px;top:244.4px;width:10.3px;height:46.3px;background:#8a8a8a;border-radius:5px"></div>
<div class="mt" style="left:1181.50px;top:216.40px;font-weight:bold;color:#333">-- General Info --</div>
<div class="mt" style="left:1204.00px;top:235.40px;color:#333">Date of Birth</div>
<div class="mt" style="left:1204.00px;top:254.65px;color:#333">Drivers Licence No</div>
<div class="mt" style="left:1204.00px;top:273.90px;color:#333">First Name</div>
<div class="mt" style="left:1204.00px;top:293.15px;color:#333">Gender</div>
<div class="mt" style="left:1204.00px;top:312.40px;color:#333">Indigenous Status</div>
<div class="mt" style="left:1204.00px;top:331.65px;color:#333">Initials</div>
<div class="mt" style="left:1204.00px;top:350.90px;color:#333">Main Activity</div>
<div class="mt" style="left:1204.00px;top:370.15px;color:#333">Marital Status</div>
<div class="mt" style="left:1204.00px;top:389.40px;color:#333">Name Suffix</div>
<div class="mt" style="left:1204.00px;top:408.65px;color:#333">Other Names</div>
<div class="mt" style="left:1204.00px;top:427.90px;color:#333">Position Text</div>
<div class="mt" style="left:1204.00px;top:447.15px;color:#333">Position Title</div>
<div class="mt" style="left:1204.00px;top:466.40px;color:#333">Preferred Name</div>
<div class="mt" style="left:1204.00px;top:485.65px;color:#333">Previous Payroll ID</div>
<div class="mt" style="left:1204.00px;top:504.90px;color:#333">Reason for Termination</div>
<div class="abs" style="left:740.00px;top:533.20px;width:736.00px;height:26.10px;background:#0561b1;"></div>
<div class="mh" style="left:748.50px;top:536.70px;">Online Timesheet Details</div>
<div class="abs" style="left:740.00px;top:561.90px;width:252.60px;height:27.50px;background:#f1f0ec;"></div>
<div class="abs" style="left:994.80px;top:561.90px;width:481.20px;height:27.50px;background:#f1f0ec;"></div>
<div class="cb dis" style="left:749.00px;top:567.30px"></div>
<div class="mt" style="left:772.50px;top:567.30px;">Print Online Timesheet Details</div>
<div class="cb dis" style="left:1004.00px;top:567.30px"></div>
<div class="mt" style="left:1027.50px;top:567.30px;">Only include employees with Online Timesheet Details</div>
<div class="abs" style="left:740.00px;top:592.20px;width:736.00px;height:26.60px;background:#0561b1;"></div>
<div class="mh" style="left:748.50px;top:595.80px;">Work Schedule Details</div>
<div class="abs" style="left:740.00px;top:621.00px;width:252.60px;height:28.00px;background:#f1f0ec;"></div>
<div class="abs" style="left:994.80px;top:621.00px;width:481.20px;height:28.00px;background:#f1f0ec;"></div>
<div class="cb on" style="left:749.00px;top:625.80px"><svg width="15" height="15" viewBox="0 0 15 15" style="position:absolute;left:-0.5px;top:-0.5px"><path d="M3.2 7.4 L6.2 10.6 L12 3.9" fill="none" stroke="#fff" stroke-width="2.4"/></svg></div>
<div class="mt" style="left:772.50px;top:626.00px;">Print Work Schedule Details</div>
<div class="cb on" style="left:1004.00px;top:625.80px"><svg width="15" height="15" viewBox="0 0 15 15" style="position:absolute;left:-0.5px;top:-0.5px"><path d="M3.2 7.4 L6.2 10.6 L12 3.9" fill="none" stroke="#fff" stroke-width="2.4"/></svg></div>
<div class="mt" style="left:1027.50px;top:626.00px;">Only include employees with Work Schedule Details</div>
<div class="abs" style="left:740.00px;top:651.60px;width:585.80px;height:25.80px;background:#0561b1;"></div>
<div class="mh" style="left:748.50px;top:654.80px;">Permanent Pay Details</div>
<div class="abs" style="left:1328.00px;top:651.60px;width:148.00px;height:25.80px;background:#0561b1;"></div>
<div class="mh" style="left:1336.50px;top:654.80px;">Additional Fields</div>
<div class="abs" style="left:740.00px;top:680.00px;width:585.80px;height:27.60px;background:#f1f0ec;"></div>
<div class="cb dis" style="left:749.00px;top:686.00px"></div>
<div class="mt" style="left:772.50px;top:685.40px;">Print Permanent Pay Details</div>
<div class="abs" style="left:740.00px;top:710.00px;width:252.70px;height:85.20px;background:#f1f0ec;"></div>
<div class="abs" style="left:994.80px;top:710.00px;width:331.00px;height:85.20px;background:#f1f0ec;"></div>
<div class="mt" style="left:748.50px;top:714.80px;">Paycodes</div>
<div class="abs" style="left:1000px;top:712.4px;width:322.5px;height:80.9px;background:#f0f0f0;border:1px solid #a9bdd6"></div>
<div class="abs" style="left:1006.00px;top:715.00px;width:295.70px;height:18.70px;background:#999;"></div>
<div class="mt" style="left:1008.00px;top:734.20px;color:#8c8c8c">ORDINARY PAY [001]</div>
<div class="mt" style="left:1008.00px;top:753.45px;color:#8c8c8c">CASUAL PAY [002]</div>
<div class="mt" style="left:1008.00px;top:772.70px;color:#8c8c8c">Other Pay [003]</div>
<div class="abs" style="left:1303.00px;top:713.40px;width:18.50px;height:78.90px;background:#fafafa;"></div>
<svg class="abs" style="left:1303px;top:720px" width="18" height="14" viewBox="0 0 18 14"><path d="M4 11.6 L9 4 L14 11.6 Z" fill="#8a8a8a" stroke="#8a8a8a" stroke-width="1.4" stroke-linejoin="round"/></svg>
<svg class="abs" style="left:1303px;top:772px" width="18" height="14" viewBox="0 0 18 14"><path d="M4 3 L9 10.6 L14 3 Z" fill="#8a8a8a" stroke="#8a8a8a" stroke-width="1.4" stroke-linejoin="round"/></svg>
<div class="abs" style="left:1307.5px;top:741.5px;width:10.5px;height:20.5px;background:#8a8a8a;border-radius:5px"></div>
<div class="abs" style="left:740.00px;top:797.80px;width:585.80px;height:28.10px;background:#f1f0ec;"></div>
<div class="cb dis" style="left:749.00px;top:804.00px"></div>
<div class="mt" style="left:772.50px;top:803.10px;">Only include employees with selected Paycodes</div>
<div class="abs" style="left:1328.00px;top:680.00px;width:148.00px;height:145.90px;background:#f1f0ec;"></div>
<div class="abs" style="left:1333.2px;top:684.4px;width:140.3px;height:138.1px;background:#efefef;border:1px solid #a9bdd6"></div>
<div class="mt" style="left:1341.50px;top:686.20px;color:#8c8c8c">Hours / Quantity</div>
<div class="mt" style="left:1341.50px;top:705.45px;color:#8c8c8c">Rate Amount</div>
<div class="mt" style="left:1341.50px;top:724.70px;color:#8c8c8c">Position</div>
<div class="mt" style="left:1341.50px;top:743.95px;color:#8c8c8c">GL Account</div>
<div class="mt" style="left:1341.50px;top:763.20px;color:#8c8c8c">Rate Code</div>
<div class="mt" style="left:1341.50px;top:782.45px;color:#8c8c8c">Period End</div>
<div class="mt" style="left:1341.50px;top:801.70px;color:#8c8c8c">Balance Due</div>
<div class="abs" style="left:1454.00px;top:685.40px;width:18.50px;height:136.10px;background:#f5f5f5;"></div>
<svg class="abs" style="left:1454px;top:690px" width="18" height="14" viewBox="0 0 18 14"><path d="M4 11.6 L9 4 L14 11.6 Z" fill="#8a8a8a" stroke="#8a8a8a" stroke-width="1.4" stroke-linejoin="round"/></svg>
<svg class="abs" style="left:1454px;top:801px" width="18" height="14" viewBox="0 0 18 14"><path d="M4 3 L9 10.6 L14 3 Z" fill="#8a8a8a" stroke="#8a8a8a" stroke-width="1.4" stroke-linejoin="round"/></svg>
<div class="abs" style="left:1458px;top:713.7px;width:11px;height:69px;background:#8a8a8a;border-radius:5.5px"></div>
<div class="abs" style="left:740.00px;top:828.50px;width:736.00px;height:26.30px;background:#0561b1;"></div>
<div class="mh" style="left:748.50px;top:831.80px;">Save this Configuration as</div>
<div class="abs" style="left:740.00px;top:857.40px;width:736.00px;height:34.60px;background:#f1f0ec;"></div>
<div class="abs" style="left:745px;top:859.8px;width:549.5px;height:30.4px;background:#fff;border:1px solid #7f9fc4"></div>
<div class="abs" style="left:740.00px;top:894.00px;width:252.70px;height:27.00px;background:#b4c4d4;"></div>
<div class="abs" style="left:994.80px;top:894.00px;width:481.20px;height:27.00px;background:#b4c4d4;"></div>
<div class="abs" style="left:746.5px;top:897.4px;width:74.2px;height:30px;background:linear-gradient(#fff,#ececec);border:1px solid #a8a8a8;border-radius:4px"></div>
<div class="mt" style="left:760.00px;top:903.00px;color:#333">Cancel</div>
<div class="abs" style="left:1384px;top:897px;width:89.5px;height:30px;background:linear-gradient(#fdebd0,#fcd69c 55%,#f8b450);border:1px solid #f0b468;border-top-color:#eda85a;border-radius:4px"></div>
<div class="mh" style="left:1417.00px;top:902.30px;color:#000">GO</div><!--/MODAL--></div>
  <div id="vscroll">
    <svg class="abs" style="left:0;top:0" width="19" height="868" viewBox="0 0 19 868">
      <path d="M3.9 19 L9.5 10.8 L15.1 19 Z" fill="#8a8a8a" stroke="#8a8a8a" stroke-width="1.5" stroke-linejoin="round"/>
      <rect x="4" y="29" width="11" height="778" rx="5.5" fill="#8a8a8a"/>
      <path d="M3.9 851 L9.5 859.2 L15.1 851 Z" fill="#8a8a8a" stroke="#8a8a8a" stroke-width="1.5" stroke-linejoin="round"/>
    </svg>
  </div>
  <svg id="ell" class="abs" style="left:0;top:0;overflow:visible" width="1910" height="921" viewBox="0 0 1910 921">
    <defs><filter id="sh" x="-10%" y="-50%" width="120%" height="200%"><feGaussianBlur in="SourceAlpha" stdDeviation="1.8"/><feOffset dx="2" dy="2.5" result="b"/><feComponentTransfer><feFuncA type="linear" slope="0.65"/></feComponentTransfer><feMerge><feMergeNode/><feMergeNode in="SourceGraphic"/></feMerge></filter></defs>
    <ellipse cx="1074" cy="622.3" rx="377.4" ry="46.2" fill="none" stroke="#6eaa1c" stroke-width="3.7" filter="url(#sh)"/>
  </svg>
</div>
</body></html>
